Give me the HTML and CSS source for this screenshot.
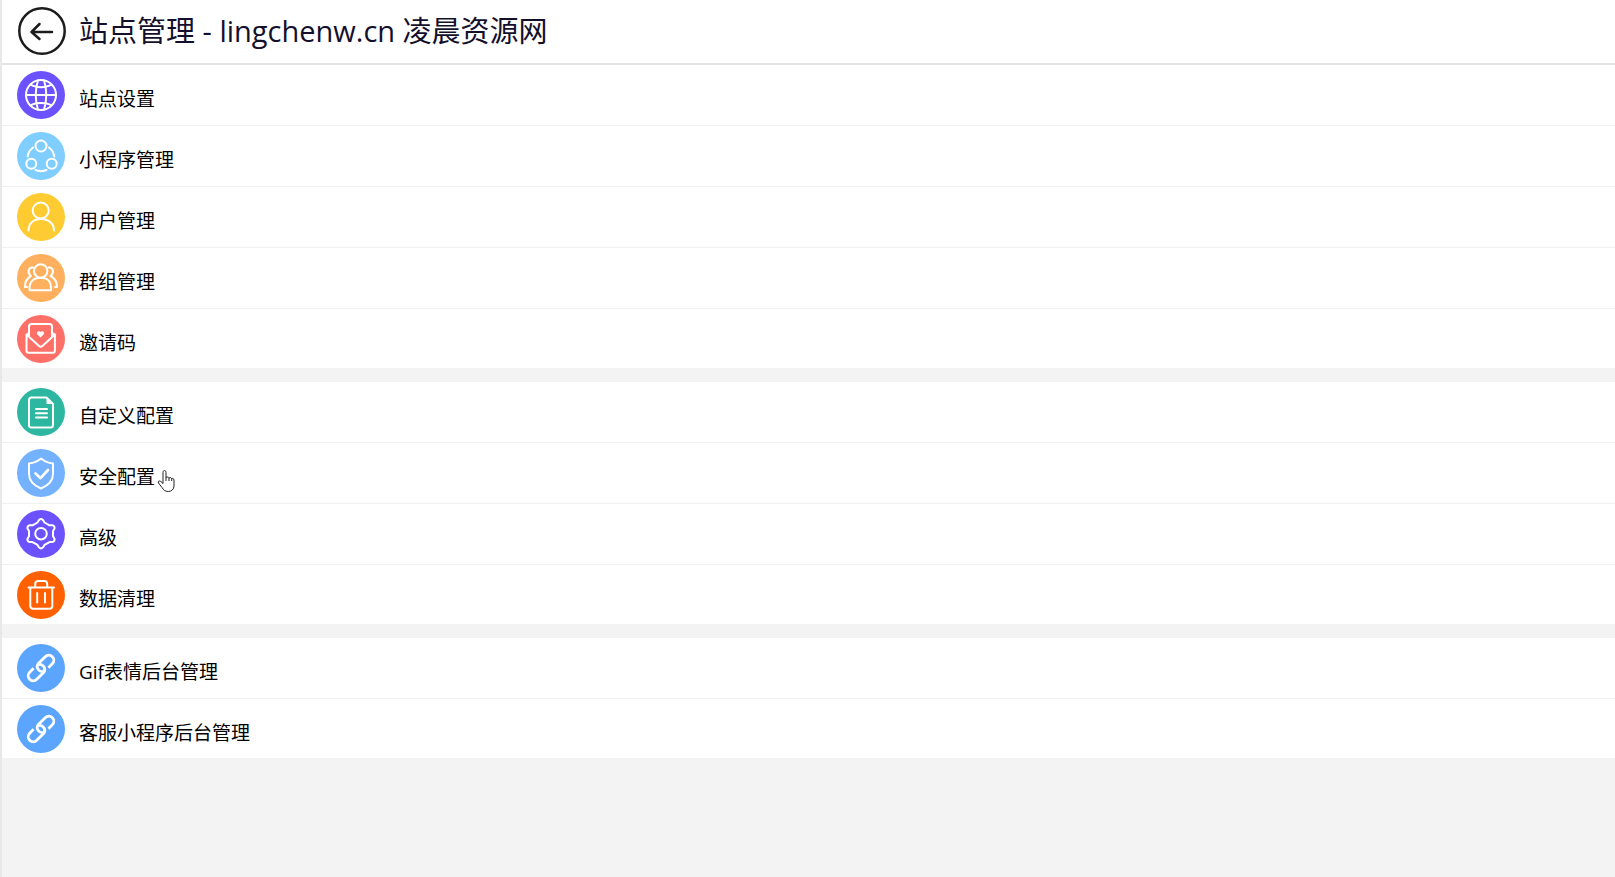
FILE: index.html
```html
<!DOCTYPE html>
<html lang="zh-CN">
<head>
    <meta charset="UTF-8">
    <title>站点管理</title>
    <link rel="stylesheet" href="styles.css">
</head>
<body>
    <header class="header">
        <button type="button" class="back" aria-label="返回">
            <svg viewBox="0 0 48 48"><circle cx="24" cy="24" r="22.7"/><path d="M34 25H14M21.500 17 13.500 25l8 7"/></svg>
        </button>
        <h1 class="title">站点管理 - lingchenw.cn 凌晨资源网</h1>
    </header>

    <main>
        <nav class="group">
            <a href="#" class="item">
                <svg class="icon purple" viewBox="0 0 48 48"><circle cx="24" cy="24" r="15"/><path d="M21 9.500c-3 8-3 21 0 29M27 9.500c3 8 3 21 0 29M9 24h30M13.500 13.500c5 3.500 16 3.500 21 0M13.500 34.500c5-3.500 16-3.500 21 0"/></svg>
                <span class="label">站点设置</span>
            </a>
            <a href="#" class="item">
                <svg class="icon sky" viewBox="0 0 48 48"><circle cx="24" cy="14" r="5.500"/><circle cx="14.300" cy="31.700" r="5"/><circle cx="34.700" cy="31.700" r="5"/><path d="M10.700 24.500c.5-4 2.500-7 5.300-9M37.300 24.500c-.5-4-2.500-7-5.300-9M18.500 38c3.500 1.500 7.500 1.500 11 0"/></svg>
                <span class="label">小程序管理</span>
            </a>
            <a href="#" class="item">
                <svg class="icon yellow" viewBox="0 0 48 48"><circle cx="23.700" cy="17.500" r="8"/><path d="M11.500 37.500c0-7 5-11.500 12.500-11.500s13 4.500 13 11.500"/></svg>
                <span class="label">用户管理</span>
            </a>
            <a href="#" class="item">
                <svg class="icon orange" viewBox="0 0 48 48"><circle cx="23.700" cy="17" r="6.700"/><path d="M12.500 36.300C12 28 16 23.800 23.700 23.800S34.500 28 34 36.300zM16 13.500c-5-.5-6 5.500-2 8.500M14 22c-4 2-6 5-6 11h2M31.500 13.500c5-.5 6 5.500 2 8.500M33.500 22c4 2 6.500 5 6.500 11h-2"/></svg>
                <span class="label">群组管理</span>
            </a>
            <a href="#" class="item">
                <svg class="icon coral" viewBox="0 0 48 48"><path d="M12 22V11.500q0-2.500 2.500-2.500h18q2.500 0 2.500 2.500V22M12 18l-2.500 1.500V35.500q0 2.200 2.200 2.200h24q2.200 0 2.200-2.200v-16L35 18M9.500 19.500 22 31q1.700 1.500 3.400 0l12.500-11.500"/><path class="solid" d="M23.500 22.500 20.500 19.500c-1.600-1.800.8-4.600 3-2.500 2.200-2.100 4.600.7 3 2.500z"/></svg>
                <span class="label">邀请码</span>
            </a>
        </nav>

        <nav class="group">
            <a href="#" class="item">
                <svg class="icon green" viewBox="0 0 48 48"><path d="M29.500 9.500H14.500q-2.500 0-2.500 2.500V37q0 2.500 2.500 2.500h19q2.500 0 2.500-2.500V16zM19 21h11M19 25.200h11M19 29.400h11"/><path class="solid" d="M29.500 9.500V16H36z"/></svg>
                <span class="label">自定义配置</span>
            </a>
            <a href="#" class="item">
                <svg class="icon blue" viewBox="0 0 48 48"><path d="M24 9.500c3.500 3 7.500 4.500 12 5V25c0 7-5 11.500-12 14.500-7-3-12-7.500-12-14.500V14.500c4.500-.5 8.500-2 12-5z"/><path class="thick" d="m18.500 24.500 5 4.700L31 21"/></svg>
                <span class="label">安全配置
                    <svg class="cursor" viewBox="0 0 18 24"><path d="M6 14.500V3.500C6 .8 9 .8 9 3.500V9c0-1.500 3-1.500 3 .5 0-1.500 2.700-1.200 2.700.7 0-1.200 2.300-1 2.300.8V17c0 3-2.500 5.500-5.500 5.500-3.500 0-5-1.500-6.500-4L1.500 14c-1-1.700 1-2.800 2.300-1.500z"/><path d="M9 9v3M12 9.500V12M14.700 10.200V12"/></svg>
                </span>
            </a>
            <a href="#" class="item">
                <svg class="icon purple" viewBox="0 0 48 48"><circle cx="24" cy="23.700" r="5.800"/><path d="M22 10q2-2 4 0l1.500 2.500 5 2.800 3 0q2.500.8 2 3.300l-1.500 2.500v5.200l1.500 2.500q.5 2.500-2 3.300l-3 0-5 2.800L26 37.400q-2 2-4 0l-1.500-2.500-5-2.800-3 0q-2.500-.8-2-3.300l1.500-2.500v-5.200l-1.500-2.500q-.5-2.500 2-3.300l3 0 5-2.800z"/></svg>
                <span class="label">高级</span>
            </a>
            <a href="#" class="item">
                <svg class="icon red" viewBox="0 0 48 48"><path d="M11.500 16.500h25.500M18.200 16v-3q0-3 3-3h6q3 0 3 3v3M13.300 16.500V35q0 2.800 2.800 2.800h16.400q2.800 0 2.800-2.800V16.500M20.200 22v9.500M28 22v9.500"/></svg>
                <span class="label">数据清理</span>
            </a>
        </nav>

        <nav class="group">
            <a href="#" class="item">
                <svg class="icon link" viewBox="0 0 48 48"><g transform="rotate(-45 24 24)"><path d="M23.500 28.300A5 5 0 0 1 25 19H35A5 5 0 0 1 35 29H29.500M24.500 19.700A5 5 0 0 1 23 29H13A5 5 0 0 1 13 19H18.500"/></g></svg>
                <span class="label">Gif表情后台管理</span>
            </a>
            <a href="#" class="item">
                <svg class="icon link" viewBox="0 0 48 48"><g transform="rotate(-45 24 24)"><path d="M23.500 28.300A5 5 0 0 1 25 19H35A5 5 0 0 1 35 29H29.500M24.500 19.700A5 5 0 0 1 23 29H13A5 5 0 0 1 13 19H18.500"/></g></svg>
                <span class="label">客服小程序后台管理</span>
            </a>
        </nav>
    </main>
</body>
</html>
```
FILE: styles.css
```css
* {
    box-sizing: border-box;
}

body {
    margin: 0;
    min-height: 100vh;
    background-color: #f3f3f3;
    border-left: 2px solid #e8e8e8;
    font-family: "Open Sans", "Noto Sans CJK SC", sans-serif;
    color: #000;
}

.header {
    display: flex;
    align-items: center;
    gap: 13px;
    padding: 7px 16px 8px;
    background-color: #fff;
    border-bottom: 2px solid #e4e4e4;
}

.back {
    width: 48px;
    height: 48px;
    padding: 0;
    border: none;
    background: none;
    cursor: pointer;
}

.back svg {
    display: block;
    fill: none;
    stroke: #1c1c1c;
    stroke-width: 2.5;
    stroke-linecap: round;
    stroke-linejoin: round;
}

.title {
    margin: 0;
    font-size: 29px;
    line-height: 40px;
    font-weight: normal;
    color: #14102c;
}

.group {
    margin-bottom: 14px;
    background-color: #fff;
}

.item {
    display: flex;
    align-items: center;
    gap: 14px;
    padding: 6px 15px;
    border-bottom: 1px solid #f1f1f1;
    color: inherit;
    text-decoration: none;
}

.item:last-child {
    padding-bottom: 5px;
    border-bottom: none;
}

.icon {
    flex: none;
    width: 48px;
    height: 48px;
    border-radius: 50%;
    fill: none;
    stroke: #fff;
    stroke-width: 2;
    stroke-linecap: round;
    stroke-linejoin: round;
}

.icon .solid {
    fill: #fff;
    stroke: none;
}

.icon .thick {
    stroke-width: 2.6;
}

.purple { background-color: #6c52fe; }
.sky { background-color: #7fceff; }
.yellow { background-color: #ffcb33; }
.orange { background-color: #ffb05e; }
.coral { background-color: #ff7168; }
.green { background-color: #2db7a0; }
.blue { background-color: #74b2ff; }
.red { background-color: #ff6000; }
.link { background-color: #5ba5ff; stroke-width: 2.8; stroke-linecap: butt; }

.label {
    position: relative;
    padding-top: 8px;
    font-size: 19px;
    line-height: 28px;
}

/* hand pointer over the hovered item */
.cursor {
    position: absolute;
    left: 100%;
    top: 14px;
    width: 18px;
    height: 24px;
    margin-left: 2px;
    fill: #fff;
    stroke: #222;
    stroke-width: 1;
    stroke-linejoin: round;
}
```
